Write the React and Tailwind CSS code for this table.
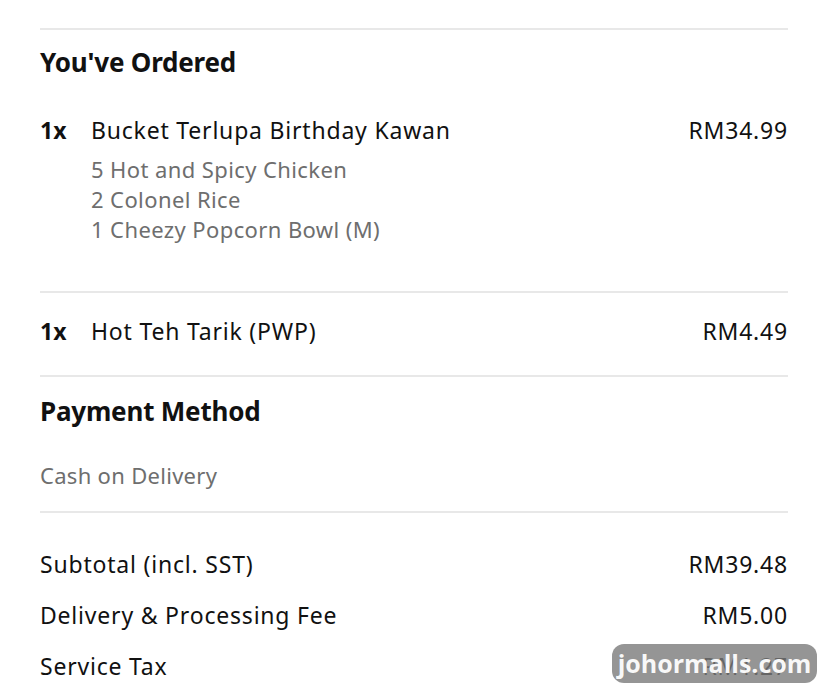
const items = ['5 Hot and Spicy Chicken', '2 Colonel Rice', '1 Cheezy Popcorn Bowl (M)'];

const totals = [
    { label: 'Subtotal (incl. SST)', value: 'RM39.48' },
    { label: 'Delivery & Processing Fee', value: 'RM5.00' },
    { label: 'Service Tax', value: 'RM1.27' },
];

function Divider() {
    return <div className="h-[2px] bg-[#e8e8e8]" />;
}

export default function App() {
    return (
        <div className="relative h-[698px] w-[828px] overflow-hidden bg-white font-['Noto_Sans',sans-serif] text-[#111]">
            <div className="mx-10 pt-[28px]">
                <Divider />

                <h2 className="mt-[16px] text-[26px] font-bold leading-[32px] tracking-[-0.2px]">You've Ordered</h2>

                <div className="mt-[37px] pb-[47px]">
                    <div className="flex items-center text-[23px] leading-[30px] tracking-[0.8px]">
                        <span className="w-[51px] font-bold tracking-normal">1x</span>
                        <span className="flex-1">Bucket Terlupa Birthday Kawan</span>
                        <span>RM34.99</span>
                    </div>
                    <div className="mt-[9px] pl-[51px] text-[22px] leading-[30px] tracking-[0.4px] text-[#6e6e6e]">
                        {items.map((it) => (
                            <div key={it}>{it}</div>
                        ))}
                    </div>
                </div>

                <Divider />

                <div className="flex items-center pt-[23px] pb-[29px] text-[23px] leading-[30px] tracking-[0.8px]">
                    <span className="w-[51px] font-bold tracking-normal">1x</span>
                    <span className="flex-1">Hot Teh Tarik (PWP)</span>
                    <span>RM4.49</span>
                </div>

                <Divider />

                <h2 className="mt-[18px] text-[26px] font-bold leading-[32px] tracking-[-0.2px]">Payment Method</h2>
                <div className="mt-[33px] mb-[21px] text-[22px] leading-[30px] tracking-[0.3px] text-[#6e6e6e]">Cash on Delivery</div>

                <Divider />

                <div className="mt-[36px] flex flex-col gap-[21px]">
                    {totals.map((t) => (
                        <div key={t.label} className="flex justify-between text-[23px] leading-[30px] tracking-[0.8px]">
                            <span>{t.label}</span>
                            <span>{t.value}</span>
                        </div>
                    ))}
                </div>
            </div>

            <div className="absolute left-[612px] top-[644px] flex h-[39px] w-[205px] items-center justify-center rounded-[12px] bg-[#7a7a7a]/80">
                <span className="font-['Open_Sans',sans-serif] text-[25px] font-bold leading-none text-white/95">johormalls.com</span>
            </div>
        </div>
    );
}
